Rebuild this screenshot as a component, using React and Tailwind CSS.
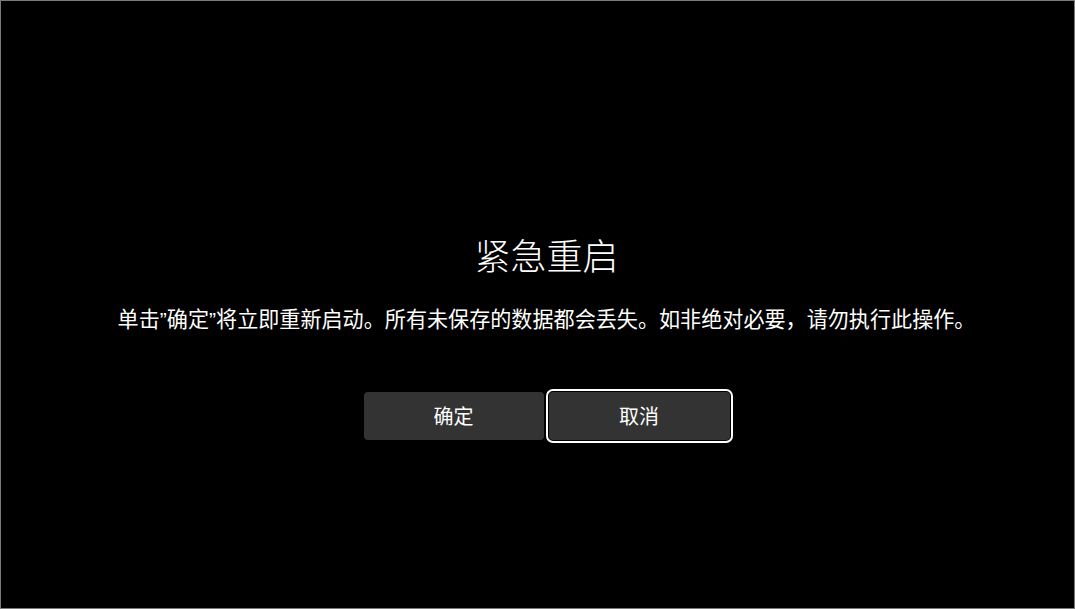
import React from "react";

const Quote = () => (
  <span style={{ fontFamily: '"Liberation Sans", sans-serif' }}>”</span>
);

const App = () => (
  <div
    className="w-[1075px] h-[609px] bg-black border border-[#7a7a7a] flex flex-col items-center pl-[18px] pt-[229px] text-white"
    style={{ fontFamily: '"Noto Sans CJK SC", "Noto Sans", sans-serif' }}
  >
    {/* 标题 */}
    <h1 className="text-[36px] leading-[48px] font-light">紧急重启</h1>

    {/* 说明 */}
    <p className="mt-[26px] text-[21.1px] leading-[28px] whitespace-nowrap">
      单击<Quote />确定<Quote />将立即重新启动。所有未保存的数据都会丢失。如非绝对必要，请勿执行此操作。
    </p>

    {/* 按钮 */}
    <div className="mt-[58px] flex gap-[5px]">
      <button className="w-[180px] h-[48px] rounded bg-[#333333] text-[20px] text-white">
        确定
      </button>
      <button className="w-[181px] h-[48px] rounded bg-[#333333] text-[20px] text-white outline-2 outline-solid outline-white outline-offset-[1px]">
        取消
      </button>
    </div>
  </div>
);

export default App;
